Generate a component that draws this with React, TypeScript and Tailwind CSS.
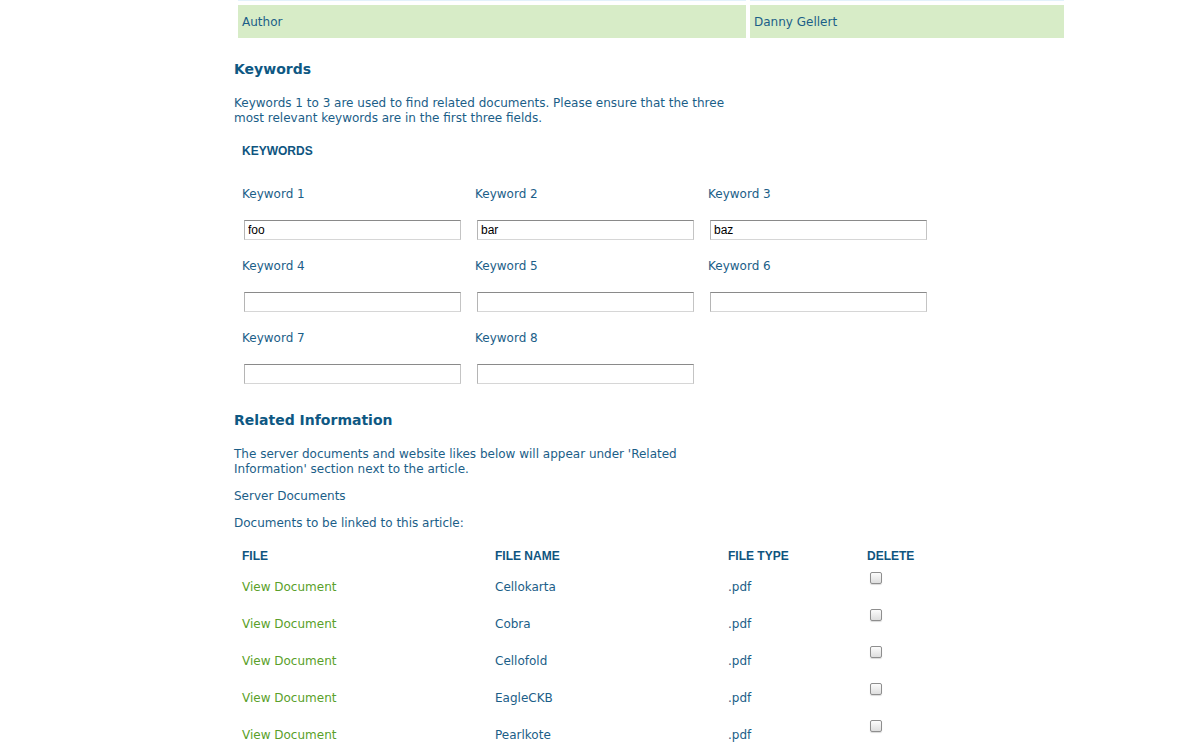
import React from 'react';

// Документы, привязанные к статье
const documents = [
  { name: 'Cellokarta', type: '.pdf' },
  { name: 'Cobra', type: '.pdf' },
  { name: 'Cellofold', type: '.pdf' },
  { name: 'EagleCKB', type: '.pdf' },
  { name: 'Pearlkote', type: '.pdf' },
];

const keywords = ['foo', 'bar', 'baz', '', '', '', '', ''];

// Поле ввода в старом стиле (inset)
function OldInput({ value }: { value: string }) {
  return (
    <input
      type="text"
      defaultValue={value}
      className="ml-[2px] h-[20px] w-[217px] border border-t-[#8a8a8a] border-l-[#b5b5b5] border-r-[#c4c4c4] border-b-[#d6d6d6] bg-white px-[3px] text-[12px] text-black outline-none font-['Liberation_Sans',Arial,sans-serif]"
    />
  );
}

// Чекбокс удаления
function OldCheckbox() {
  return (
    <span className="block h-[12px] w-[12px] rounded-[2px] border border-[#8e8e8e] bg-gradient-to-b from-[#fcfcfc] to-[#dedede] shadow-[0_1px_1px_rgba(0,0,0,0.15)]" />
  );
}

export default function App() {
  return (
    <div className="min-h-screen bg-white pl-[234px] text-[12px] leading-[15px] text-[#1b5e88] font-['DejaVu_Sans',Verdana,sans-serif]">
      {/* Таблица сведений */}
      <div className="grid grid-cols-[508px_314px] gap-[4px] px-[4px]">
        <div className="h-px bg-[#e2f1fb]" />
        <div className="h-px bg-[#e2f1fb]" />
        <div className="flex h-[33px] items-center bg-[#d7ecc7] pl-[4px] pt-[2px]">Author</div>
        <div className="flex h-[33px] items-center bg-[#d7ecc7] pl-[4px] pt-[2px]">Danny Gellert</div>
      </div>

      {/* Ключевые слова */}
      <h2 className="mt-[22px] text-[14px] font-bold leading-[18px] text-[#0e5883]">Keywords</h2>
      <p className="mt-[18px] w-[495px]">
        Keywords 1 to 3 are used to find related documents. Please ensure that the three most relevant keywords are in the first three fields.
      </p>
      <div className="mt-[18px] pl-[8px] font-['Liberation_Sans',Arial,sans-serif] text-[12px] font-bold text-[#0f5580]">
        KEYWORDS
      </div>
      <div className="mt-[28px] grid w-[699px] grid-cols-[233px_233px_233px] pl-[8px]">
        {keywords.map((kw, i) => (
          <div key={i} className="flex h-[72px] flex-col">
            <span className="h-[15px]">Keyword {i + 1}</span>
            <div className="mt-[18px]">
              <OldInput value={kw} />
            </div>
          </div>
        ))}
      </div>

      {/* Связанная информация */}
      <h2 className="mt-[8px] text-[14px] font-bold leading-[18px] text-[#0e5883]">Related Information</h2>
      <p className="mt-[18px] w-[495px]">
        The server documents and website likes below will appear under 'Related Information' section next to the article.
      </p>
      <p className="mt-[12px]">Server Documents</p>
      <p className="mt-[12px]">Documents to be linked to this article:</p>

      <div className="mt-[18px] pl-[8px]">
        <div className="grid grid-cols-[253px_233px_139px_100px] font-['Liberation_Sans',Arial,sans-serif] text-[12px] font-bold text-[#0f5580]">
          <span>FILE</span>
          <span>FILE NAME</span>
          <span>FILE TYPE</span>
          <span>DELETE</span>
        </div>
        <div className="mt-[16px]">
          {documents.map((doc) => (
            <div key={doc.name} className="grid h-[37px] grid-cols-[253px_233px_139px_100px] items-start">
              <span className="text-[#5a9f2a]">View Document</span>
              <span>{doc.name}</span>
              <span>{doc.type}</span>
              <span className="ml-[3px] mt-[-8px]">
                <OldCheckbox />
              </span>
            </div>
          ))}
        </div>
      </div>
    </div>
  );
}
